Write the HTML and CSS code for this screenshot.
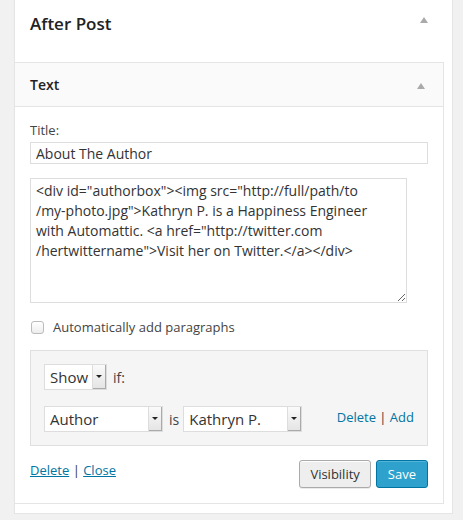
FILE: index.html
```html
<!DOCTYPE html>
<html lang="en">
<head>
    <meta charset="UTF-8">
    <title>After Post</title>
    <link rel="stylesheet" href="styles.css">
</head>
<body>
    <div class="sidebar">
        <div class="sidebar-name">
            <h2>After Post</h2>
            <span class="toggle"></span>
        </div>
        <div class="widget">
            <div class="widget-top">
                <h3>Text</h3>
                <span class="toggle"></span>
            </div>
            <div class="widget-inside">
                <label class="field-label" for="title">Title:</label>
                <input type="text" id="title" class="title-input" value="About The Author">
                <textarea class="content" spellcheck="false">&lt;div id="authorbox"&gt;&lt;img src="http://full/path/to
/my-photo.jpg"&gt;Kathryn P. is a Happiness Engineer
with Automattic. &lt;a href="http://twitter.com
/hertwittername"&gt;Visit her on Twitter.&lt;/a&gt;&lt;/div&gt;</textarea>
                <label class="check-row">
                    <input type="checkbox" class="check">
                    <span>Automatically add paragraphs</span>
                </label>
                <div class="conditions">
                    <div class="cond-row">
                        <div class="select small"><span class="value">Show</span><span class="arrow"></span></div>
                        <span class="word">if:</span>
                    </div>
                    <div class="cond-row">
                        <div class="select wide"><span class="value">Author</span><span class="arrow"></span></div>
                        <span class="word">is</span>
                        <div class="select wide"><span class="value">Kathryn P.</span><span class="arrow"></span></div>
                        <span class="rule-links"><a href="#">Delete</a> | <a href="#">Add</a></span>
                    </div>
                </div>
                <div class="widget-control">
                    <div class="control-links"><a href="#">Delete</a> | <a href="#">Close</a></div>
                    <div class="control-buttons">
                        <button class="button">Visibility</button>
                        <button class="button primary">Save</button>
                    </div>
                </div>
            </div>
        </div>
    </div>
</body>
</html>
```

FILE: styles.css
```css
body {
    margin: 0;
    background: #f1f1f1;
    font-family: "Open Sans", sans-serif;
    color: #222;
}
.sidebar {
    margin-left: 14px;
    width: 437px;
    background: #fff;
    border: 1px solid #e5e5e5;
    border-top: none;
    box-shadow: 0 1px 1px rgba(0,0,0,0.04);
    padding-bottom: 9px;
}
.sidebar-name {
    height: 62px;
    position: relative;
}
.sidebar-name h2 {
    margin: 0;
    padding: 12px 0 0 15px;
    font-size: 17px;
    font-weight: 600;
    line-height: 24px;
}
.toggle {
    position: absolute;
    width: 0;
    height: 0;
    border-left: 4px solid transparent;
    border-right: 4px solid transparent;
    border-bottom: 6px solid #aaa;
}
.sidebar-name .toggle {
    right: 24px;
    top: 17px;
}
.widget {
    width: 428px;
    margin-left: -1px;
    border: 1px solid #e5e5e5;
}
.widget-top {
    position: relative;
    height: 43px;
    background: #fafafa;
    border-bottom: 1px solid #e5e5e5;
}
.widget-top h3 {
    margin: 0;
    padding: 12px 0 0 15px;
    font-size: 14px;
    font-weight: 600;
    line-height: 20px;
}
.widget-top .toggle {
    right: 18px;
    top: 20px;
}
.widget-inside {
    padding: 14px 15px 15px;
}
.field-label {
    display: block;
    font-size: 13px;
    line-height: 18px;
    color: #444;
}
.title-input {
    display: block;
    box-sizing: border-box;
    width: 398px;
    height: 22px;
    margin: 3px 0 0;
    padding: 0 5px;
    border: 1px solid #ddd;
    font-family: inherit;
    font-size: 14px;
    color: #333;
    outline: none;
}
.content {
    display: block;
    box-sizing: border-box;
    width: 377px;
    height: 125px;
    margin: 14px 0 0;
    padding: 2px 5px;
    border: 1px solid #ddd;
    font-family: inherit;
    font-size: 14px;
    line-height: 20px;
    color: #333;
    outline: none;
}
.check-row {
    display: flex;
    align-items: center;
    margin: 16px 0 0 1px;
    font-size: 13px;
    color: #444;
    height: 16px;
}
.check {
    appearance: none;
    box-sizing: border-box;
    width: 13px;
    height: 13px;
    margin: 0 9px 0 0;
    border: 1px solid #bbb;
    border-radius: 3px;
    background: linear-gradient(#fff, #ededed);
}
.conditions {
    margin-top: 15px;
    background: #f5f5f5;
    border: 1px solid #dfdfdf;
    padding: 13px 13px 13px;
}
.cond-row {
    display: flex;
    align-items: center;
    height: 26px;
}
.cond-row + .cond-row {
    margin-top: 16px;
}
.select {
    box-sizing: border-box;
    display: flex;
    height: 26px;
    border: 1px solid #ddd;
    background: #fff;
    font-size: 15px;
    color: #333;
}
.select.small { width: 63px; }
.select.wide { width: 119px; }
.select .value {
    flex: 1;
    padding-left: 5px;
    line-height: 24px;
}
.select .arrow {
    width: 13px;
    position: relative;
    background: linear-gradient(#fafafa, #e4e4e4);
    border-left: 1px solid #ddd;
    box-shadow: inset -1px -1px 0 #aaa;
}
.select .arrow::after {
    content: "";
    position: absolute;
    left: 3px;
    top: 10px;
    border-left: 3px solid transparent;
    border-right: 3px solid transparent;
    border-top: 3px solid #222;
}
.word {
    font-size: 14px;
    color: #444;
    margin: 0 4px 0 6px;
}
.rule-links {
    margin-left: auto;
    font-size: 13px;
    color: #333;
    padding-bottom: 5px;
}
a {
    color: #0074a2;
}
.rule-links a {
    text-decoration: none;
}
.widget-control {
    display: flex;
    justify-content: space-between;
    margin-top: 13px;
}
.control-links {
    font-size: 13px;
    line-height: 20px;
    color: #333;
    padding-top: 1px;
}
.control-buttons {
    display: flex;
    gap: 5px;
    padding-top: 1px;
}
.button {
    box-sizing: border-box;
    height: 28px;
    padding: 0 10px;
    border: 1px solid #ccc;
    border-radius: 3px;
    background: #f7f7f7;
    box-shadow: inset 0 1px 0 #fff, 0 1px 0 rgba(0,0,0,0.08);
    font-family: inherit;
    font-size: 13px;
    color: #333;
}
.button:first-child {
    border-color: #aaa;
    background: #eee;
}
.button.primary {
    background: #2ea2cc;
    border-color: #0074a2;
    color: #fff;
    box-shadow: inset 0 1px 0 rgba(120,200,230,0.5);
    padding: 0 11px;
}
```
